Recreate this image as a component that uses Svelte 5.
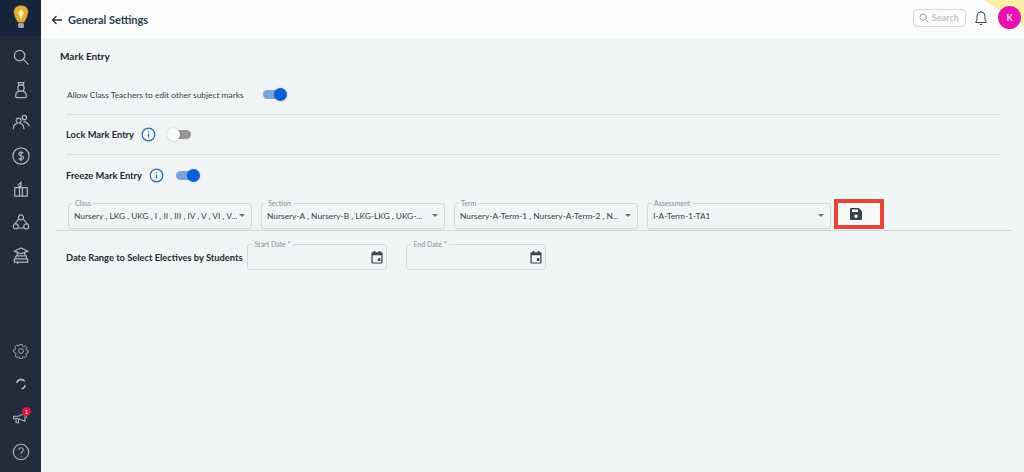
<script>
	const topIcons = [
		'M9 3.500a5.500 5.500 0 1 0 0 11 5.500 5.500 0 0 0 0-11zM13 13l5.500 5.500',
		'M7.500 2.800h6l-.6 2.200H8.100zM10.500 5a3.300 3.300 0 1 1 0 6.600 3.300 3.300 0 0 1 0-6.600zM6 18.500h9a1 1 0 0 0 1-1V16a4.400 4.400 0 0 0-4.400-4.400H9.400A4.400 4.400 0 0 0 5 16v1.500a1 1 0 0 0 1 1z',
		'M8 5.500a2.500 2.500 0 1 1 0 5 2.500 2.500 0 0 1 0-5zM14 2.500a2.300 2.300 0 1 1 0 4.600 2.300 2.300 0 0 1 0-4.600zM2.500 17v-1a5.500 5.500 0 0 1 11 0v1M13 9.500a5 5 0 0 1 6 4.500',
		'M10.500 2a8.500 8.500 0 1 0 0 17 8.500 8.500 0 0 0 0-17zM13 7.500c-1-1.200-4.800-1.300-4.800.8 0 2.500 5 1.400 5 4 0 2.200-4 2.100-5.200.7M10.500 5v11',
		'M4 9h13v9H4zM9 9v9M12 9v9M10.500 9V3.500L7 6.500M7 9l3.500-2.500',
		'M10.500 3a2.600 2.600 0 1 1 0 5.200 2.600 2.600 0 0 1 0-5.200zM5 12.500a2.600 2.600 0 1 1 0 5.200 2.600 2.600 0 0 1 0-5.200zM16 12.500a2.600 2.600 0 1 1 0 5.200 2.600 2.600 0 0 1 0-5.200zM8.500 7 3.800 12.700M12.500 7l4.700 5.700M7.600 16.800h5.800',
		'M3.500 6.500 10.500 3l7 3.500-7 2.800zM6.500 8v3.500h8V8M3.500 14.500h14v3.500h-14zM5 11.500h11v3M5 14.500v-3M7 18v2'
	];
	const gear = 'M8.800 2h3.400l.5 2.500 1.700.8 2.200-1.300 2.300 2.400-1.300 2.100.7 1.700 2.400.6v3.300l-2.400.6-.7 1.700 1.300 2.100-2.300 2.400-2.200-1.300-1.700.8-.5 2.500H8.800l-.5-2.500-1.700-.8-2.200 1.300-2.300-2.400 1.300-2.100-.7-1.700L0 13V9.700l2.400-.6.7-1.700-1.300-2.100 2.300-2.400 2.200 1.300 1.700-.8z';
	const rows = [
		{ label: 'Class', value: 'Nursery , LKG , UKG , I , II , III , IV , V , VI , V...' },
		{ label: 'Section', value: 'Nursery-A , Nursery-B , LKG-LKG , UKG-...' },
		{ label: 'Term', value: 'Nursery-A-Term-1 , Nursery-A-Term-2 , N...' },
		{ label: 'Assessment', value: 'I-A-Term-1-TA1' }
	];
</script>

<div class="shell">
	<aside class="sidebar">
		<div class="logo">
			<svg width="16" height="24" viewBox="0 0 16 24">
				<path d="M8 .5C3.500.5 1 3 .8 6.500c0 4 2 8 4.200 11h6c2.200-3 4.200-7 4.200-11C15 3 12.500.5 8 .5z" fill="#dfae35" stroke="#6b5522" stroke-width=".6" />
				<path d="M8 4 5 7.500 8 15l3-7.500z" fill="#f6e7ad" />
				<rect x="5" y="18" width="6" height="5" rx="1.500" fill="#98a2ac" />
			</svg>
		</div>
		<nav class="nav">
			{#each topIcons as d}
				<svg class="ic" width="20" height="20" viewBox="0 0 21 21"><path {d} /></svg>
			{/each}
		</nav>
		<nav class="nav bottom">
			<svg class="ic" width="16" height="16" viewBox="0 0 21 23"><path d={gear} /><circle cx="10.500" cy="11.500" r="3.500" /></svg>
			<svg class="ic thick" width="16" height="16" viewBox="0 0 21 21"><path d="M5 9a5.800 5.800 0 0 1 10.500-1.800M16 12a5.800 5.800 0 0 1-4.500 4.800" /></svg>
			<div class="announce">
				<svg class="ic" width="17" height="17" viewBox="0 0 21 21"><path d="M2 9h6l8-4v10l-8-3H2zM5 12v5h3v-4M18 9v2" /></svg>
				<span class="badge">1</span>
			</div>
			<svg class="ic" width="18" height="18" viewBox="0 0 21 21"><circle cx="10.500" cy="10.500" r="9" /><path d="M8 8a2.600 2.600 0 1 1 3.800 2.400c-.9.500-1.300 1-1.300 2.100M10.500 15v1" /></svg>
		</nav>
	</aside>

	<div class="page">
		<header class="header">
			<svg class="back" width="12" height="12" viewBox="0 0 12 12"><path d="M11 6H1.500M5.500 2 1.500 6l4 4" /></svg>
			<h1>General Settings</h1>
			<div class="spacer"></div>
			<div class="search">
				<svg width="10" height="10" viewBox="0 0 12 12"><circle cx="5" cy="5" r="3.800" /><path d="m8 8 3 3" /></svg>
				<span>Search</span>
			</div>
			<svg class="bell" width="14" height="16" viewBox="0 0 14 16"><path d="M7 2a4 4 0 0 0-4 4v4l-1.500 2.500h11L11 10V6a4 4 0 0 0-4-4zM7 .8V2M5.800 14.500h2.400" /></svg>
			<div class="avatar">K</div>
			<div class="corner"></div>
		</header>

		<main class="main">
			<h2>Mark Entry</h2>
			<section class="settings">
				<div class="row first">
					<span class="plain">Allow Class Teachers to edit other subject marks</span>
					<span class="toggle on gap-allow"><i></i></span>
				</div>
				<div class="row">
					<strong>Lock Mark Entry</strong>
					<svg class="info" width="15" height="15" viewBox="0 0 15 15"><circle cx="7.500" cy="7.500" r="6.300" /><path d="M7.500 6.800v3.800M7.500 4.300v1" /></svg>
					<span class="toggle"><i></i></span>
				</div>
				<div class="row">
					<strong>Freeze Mark Entry</strong>
					<svg class="info" width="15" height="15" viewBox="0 0 15 15"><circle cx="7.500" cy="7.500" r="6.300" /><path d="M7.500 6.800v3.800M7.500 4.300v1" /></svg>
					<span class="toggle on"><i></i></span>
				</div>
			</section>

			<div class="filters">
				{#each rows as r}
					<div class="select">
						<label>{r.label}</label>
						<span class="value">{r.value}</span>
						<span class="caret"></span>
					</div>
				{/each}
				<button class="save" aria-label="Save">
					<svg width="12" height="12" viewBox="0 0 12 12"><path d="M1.300 0h7.500L12 3.200v7.500A1.300 1.300 0 0 1 10.700 12H1.300A1.300 1.300 0 0 1 0 10.700V1.300A1.300 1.300 0 0 1 1.300 0zM2 1.500V4h6V1.500zM6 6.500a1.800 1.800 0 1 0 0 3.600 1.800 1.800 0 0 0 0-3.600z" fill-rule="evenodd" /></svg>
				</button>
			</div>

			<div class="dates">
				<strong>Date Range to Select Electives by Students</strong>
				<div class="date">
					<label>Start Date *</label>
					<svg width="12" height="13" viewBox="0 0 14 15"><path d="M3 0h2v1.500h4V0h2v1.500h1.200c.7 0 1.300.6 1.300 1.300v10.400c0 .7-.6 1.300-1.300 1.300H1.800c-.7 0-1.300-.6-1.300-1.300V2.800c0-.7.6-1.300 1.300-1.300H3zM2 5v8.200h10V5zm6 3.500h3v3H8z" fill-rule="evenodd" /></svg>
				</div>
				<div class="date">
					<label>End Date *</label>
					<svg width="12" height="13" viewBox="0 0 14 15"><path d="M3 0h2v1.500h4V0h2v1.500h1.200c.7 0 1.300.6 1.300 1.300v10.400c0 .7-.6 1.300-1.300 1.300H1.800c-.7 0-1.300-.6-1.300-1.300V2.800c0-.7.6-1.300 1.300-1.300H3zM2 5v8.200h10V5zm6 3.500h3v3H8z" fill-rule="evenodd" /></svg>
				</div>
			</div>
		</main>
	</div>
</div>

<style>
	:global(body) {
		margin: 0;
		background: #f1f4f4;
	}

	.shell {
		display: flex;
		height: 472px;
		overflow: hidden;
		font-family: Lato, 'Noto Sans', sans-serif;
		color: #2a2f35;
	}

	.sidebar {
		width: 41px;
		flex: none;
		background: #232c3b;
		display: flex;
		flex-direction: column;
		align-items: center;
	}

	.logo {
		width: 100%;
		height: 36px;
		background: #18243a;
		display: flex;
		align-items: center;
		justify-content: center;
		padding-bottom: 2px;
		box-sizing: border-box;
	}

	.nav {
		display: flex;
		flex-direction: column;
		align-items: center;
		gap: 13px;
		margin-top: 11px;
	}

	.nav.bottom {
		margin-top: auto;
		margin-bottom: 11px;
		gap: 17px;
	}

	.ic {
		fill: none;
		stroke: #aeb5bd;
		stroke-width: 1.300;
		display: block;
	}

	.ic.thick {
		stroke-width: 1.800;
		stroke: #c2c8ce;
	}

	.announce {
		position: relative;
		height: 17px;
	}

	.badge {
		position: absolute;
		top: -2px;
		right: -2px;
		width: 9px;
		height: 9px;
		border-radius: 50%;
		background: #e0173c;
		color: #fff;
		font-size: 6px;
		line-height: 9px;
		text-align: center;
	}

	.page {
		flex: 1;
		min-width: 0;
		display: flex;
		flex-direction: column;
	}

	.header {
		position: relative;
		height: 38px;
		flex: none;
		background: #fcfcfc;
		display: flex;
		align-items: center;
		padding: 0 3px 3px 10px;
		box-sizing: border-box;
		overflow: hidden;
	}

	.back {
		fill: none;
		stroke: #24323d;
		stroke-width: 1.300;
		margin: 4px 5px 0 0;
	}

	h1 {
		margin: 4px 0 0;
		font-size: 11px;
		font-weight: 700;
		color: #1f3f4f;
	}

	.spacer {
		flex: 1;
	}

	.search {
		width: 53px;
		height: 18px;
		border: 1px solid #d6d6d6;
		border-radius: 4px;
		display: flex;
		align-items: center;
		gap: 3px;
		padding-left: 5px;
		box-sizing: border-box;
		font-size: 9px;
		font-weight: 700;
		color: #c4c4c4;
	}

	.search svg {
		fill: none;
		stroke: #8c8c8c;
		flex: none;
	}

	.bell {
		fill: none;
		stroke: #4a4a4a;
		margin: 0 10px 0 8px;
	}

	.avatar {
		position: relative;
		z-index: 1;
		width: 23px;
		height: 23px;
		border-radius: 50%;
		background: #e514b0;
		color: #fbd0ee;
		font-size: 9px;
		font-weight: 700;
		display: flex;
		align-items: center;
		justify-content: center;
	}

	.corner {
		position: absolute;
		right: 0;
		top: 0;
		width: 40px;
		height: 25px;
		background: linear-gradient(to top right, transparent 50%, #fdeea5 50%);
	}

	.main {
		flex: 1;
		padding: 12px 12px 0 14px;
	}

	h2 {
		margin: 0 0 0 5px;
		font-size: 10px;
		font-weight: 700;
		color: #23282d;
		line-height: 13px;
	}

	.settings {
		margin: 7px 12px 0 11px;
	}

	.row {
		height: 40px;
		display: flex;
		align-items: center;
		border-bottom: 1px solid #d9dcdc;
		box-sizing: border-box;
	}

	.row:last-child {
		border-bottom: 0;
	}

	.row.first {
		height: 45px;
		padding-top: 5px;
	}

	.plain {
		font-size: 8.400px;
		color: #3a3f44;
		margin-left: 1px;
	}

	.row strong,
	.dates strong {
		font-size: 9.300px;
		font-weight: 700;
		color: #25292d;
	}

	.info {
		fill: none;
		stroke: #1f6aa8;
		stroke-width: 1.200;
		margin: 0 12px 0 7px;
	}

	.toggle {
		position: relative;
		width: 23px;
		height: 9px;
		border-radius: 5px;
		background: #969696;
		display: block;
	}

	.toggle i {
		position: absolute;
		left: -1px;
		top: -2px;
		width: 13px;
		height: 13px;
		border-radius: 50%;
		background: #fafafa;
		box-shadow: 0 0 2px rgba(0, 0, 0, 0.25);
	}

	.toggle.on {
		background: #7ba3dd;
	}

	.toggle.on i {
		left: 11px;
		background: #0b5ed7;
	}

	.gap-allow {
		margin-left: 19px;
	}

	.filters {
		display: flex;
		align-items: center;
		gap: 9px;
		margin-top: 1px;
		padding: 0 0 0 13px;
		height: 34px;
		border-bottom: 1px solid #d5d8d8;
	}

	.select {
		position: relative;
		width: 184px;
		height: 26px;
		border: 1px solid #d5d9d9;
		border-radius: 3px;
		box-sizing: border-box;
		display: flex;
		align-items: center;
		padding: 0 5px;
		margin-top: 5px;
		box-shadow: 0 1px 1px rgba(0, 0, 0, 0.04);
	}

	label {
		position: absolute;
		top: -5px;
		left: 4px;
		padding: 0 2px;
		background: #f1f4f4;
		font-size: 7px;
		line-height: 9px;
		color: #8b8f92;
	}

	.value {
		font-size: 8.400px;
		color: #3c4146;
		white-space: nowrap;
		overflow: hidden;
	}

	.caret {
		position: absolute;
		right: 6px;
		top: 10px;
		border: 3.500px solid transparent;
		border-top: 3.500px solid #6e6e6e;
		border-bottom: 0;
	}

	.save {
		width: 50px;
		height: 30px;
		flex: none;
		margin-left: -6px;
		margin-top: 1px;
		border: 4px solid #e2453a;
		background: #f7f8f8;
		padding: 0 0 0 12px;
		box-sizing: border-box;
		display: flex;
		align-items: center;
	}

	.save svg {
		fill: #3b4148;
	}

	.dates {
		display: flex;
		align-items: center;
		height: 52px;
		padding-left: 11px;
	}

	.date {
		position: relative;
		width: 140px;
		height: 26px;
		margin-right: 19px;
		border: 1px solid #d5d9d9;
		border-radius: 3px;
		box-sizing: border-box;
		display: flex;
		align-items: center;
		justify-content: flex-end;
		padding-right: 3px;
	}

	.dates strong {
		margin-right: 5px;
		white-space: nowrap;
	}

	.date svg {
		fill: #3f454b;
	}
</style>
